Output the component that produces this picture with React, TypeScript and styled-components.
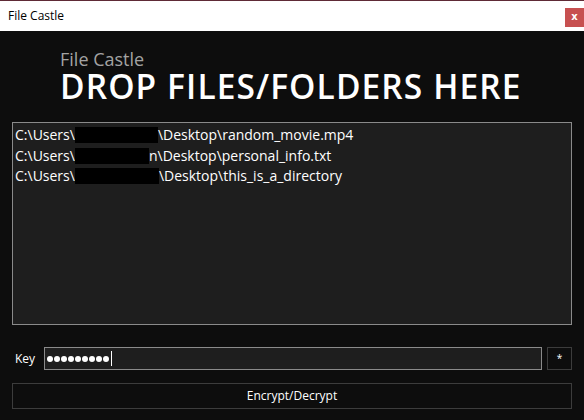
import React from 'react';
import styled, { createGlobalStyle } from 'styled-components';

const GlobalStyle = createGlobalStyle`
  html, body {
    margin: 0;
    padding: 0;
    background: #0d0d0d;
  }
  body {
    font-family: 'Open Sans', 'Noto Sans', sans-serif;
  }
`;

type PathItem = {
  hide: number;
  rest: string;
};

const paths: PathItem[] = [
  { hide: 83, rest: '\\Desktop\\random_movie.mp4' },
  { hide: 74, rest: 'n\\Desktop\\personal_info.txt' },
  { hide: 84, rest: '\\Desktop\\this_is_a_directory' },
];

function App() {
  return (
    <Window>
      <GlobalStyle />
      <TitleBar>
        <TitleText>File Castle</TitleText>
        <CloseButton>x</CloseButton>
      </TitleBar>
      <Main>
        <Header>
          <SubTitle>File Castle</SubTitle>
          <DropTitle>DROP FILES/FOLDERS HERE</DropTitle>
        </Header>
        <FileList>
          {paths.map((p, i) => (
            <FileRow key={i}>
              C:\Users\
              <Redacted style={{ width: p.hide }} />
              {p.rest}
            </FileRow>
          ))}
        </FileList>
        <KeyRow>
          <KeyLabel>Key</KeyLabel>
          <KeyInput>
            {Array.from({ length: 9 }).map((_, i) => (
              <Dot key={i} />
            ))}
            <Caret />
          </KeyInput>
          <StarButton>*</StarButton>
        </KeyRow>
        <ActionButton>Encrypt/Decrypt</ActionButton>
      </Main>
    </Window>
  );
}

export default App;

const Window = styled.div`
  width: 584px;
  height: 420px;
  display: flex;
  flex-direction: column;
  background: #0d0d0d;
  overflow: hidden;
`;

const TitleBar = styled.div`
  height: 30px;
  border-top: 1px solid #5e2a36;
  background: #ffffff;
  display: flex;
  align-items: flex-start;
  justify-content: space-between;
  padding-left: 8px;
`;

const TitleText = styled.div`
  font-size: 12px;
  line-height: 16px;
  margin-top: 7px;
  color: #000;
`;

const CloseButton = styled.div`
  width: 19px;
  height: 19px;
  margin-top: 7px;
  background: #c75050;
  color: #fff;
  font-family: 'DejaVu Sans', sans-serif;
  font-weight: bold;
  font-size: 10px;
  line-height: 18px;
  text-align: center;
`;

const Main = styled.div`
  flex: 1;
  display: flex;
  flex-direction: column;
  padding: 0 12px;
`;

const Header = styled.div`
  padding-left: 48px;
  padding-top: 18px;
  height: 91px;
  box-sizing: border-box;
`;

const SubTitle = styled.div`
  font-size: 18px;
  line-height: 20px;
  color: #a3a3a3;
`;

const DropTitle = styled.div`
  font-size: 33.5px;
  line-height: 34px;
  letter-spacing: 1.1px;
  font-weight: 600;
  color: #ffffff;
`;

const FileList = styled.div`
  height: 197px;
  background: #1e1e1e;
  border: 1px solid #8a8a8a;
  padding: 2px 2px;
  box-sizing: content-box;
`;

const FileRow = styled.div`
  font-size: 14px;
  line-height: 20.5px;
  color: #ffffff;
  white-space: nowrap;
  display: flex;
  align-items: center;
`;

const Redacted = styled.span`
  display: inline-block;
  height: 16px;
  background: #000;
`;

const KeyRow = styled.div`
  display: flex;
  align-items: center;
  margin-top: 22px;
  height: 23px;
`;

const KeyLabel = styled.div`
  width: 29px;
  padding-left: 3px;
  font-size: 12px;
  color: #ffffff;
`;

const KeyInput = styled.div`
  flex: 1;
  height: 21px;
  background: #1e1e1e;
  border: 1px solid #8a8a8a;
  display: flex;
  align-items: center;
  padding-left: 2px;
  gap: 1px;
`;

const Dot = styled.span`
  width: 6px;
  height: 6px;
  border-radius: 50%;
  background: #ffffff;
`;

const Caret = styled.span`
  width: 1px;
  height: 15px;
  margin-left: 1px;
  background: #ffffff;
`;

const StarButton = styled.div`
  width: 23px;
  height: 21px;
  margin-left: 5px;
  border: 1px solid #3c3c3c;
  color: #ffffff;
  font-size: 10px;
  line-height: 21px;
  text-align: center;
`;

const ActionButton = styled.div`
  margin-top: 13px;
  height: 24px;
  border: 1px solid #3c3c3c;
  color: #ffffff;
  font-size: 12px;
  line-height: 24px;
  text-align: center;
`;
